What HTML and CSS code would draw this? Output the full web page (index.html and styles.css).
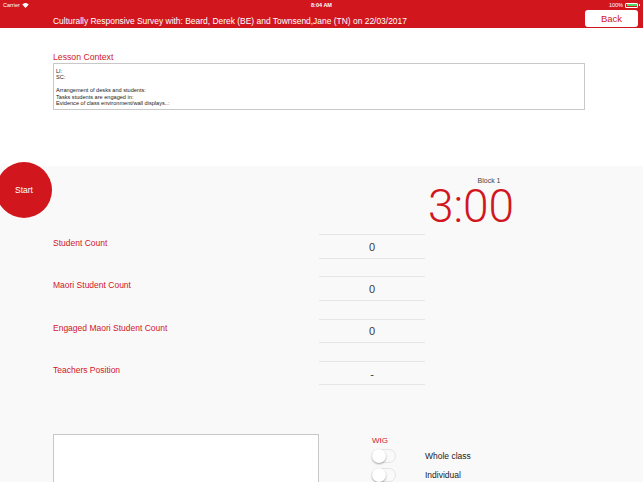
FILE: index.html
```html
<!DOCTYPE html>
<html>
<head>
<meta charset="utf-8">
<link rel="stylesheet" href="styles.css">
</head>
<body>
<div class="app">
  <header class="header">
    <div class="status">
      <div class="status-left">Carrier
        <svg class="wifi" width="7" height="5" viewBox="0 0 14 10"><path d="M7 10 L0.5 3 A9.5 9.5 0 0 1 13.5 3 Z" fill="#fff"/></svg>
      </div>
      <div class="status-center">8:04 AM</div>
      <div class="status-right">100%
        <span class="battery"><span class="battery-fill"></span></span><span class="battery-tip"></span>
      </div>
    </div>
    <div class="nav">
      <div class="title">Culturally Responsive Survey with: Beard, Derek (BE) and Townsend,Jane (TN) on 22/03/2017</div>
      <button class="back">Back</button>
    </div>
  </header>

  <section class="context">
    <div class="ctx-label">Lesson Context</div>
    <div class="ctx-box">
      <div>LI:</div>
      <div>SC:</div>
      <div>&nbsp;</div>
      <div>Arrangement of desks and students:</div>
      <div>Tasks students are engaged in:</div>
      <div>Evidence of class environment/wall displays..:</div>
    </div>
  </section>

  <section class="main">
    <button class="start">Start</button>
    <div class="top">
      <div class="timer">
        <div class="block-label">Block 1</div>
        <div class="clock">3:00</div>
      </div>
    </div>
    <div class="rows">
      <div class="row"><div class="row-label">Student Count</div><div class="cell">0</div></div>
      <div class="row"><div class="row-label">Maori Student Count</div><div class="cell">0</div></div>
      <div class="row"><div class="row-label">Engaged Maori Student Count</div><div class="cell">0</div></div>
      <div class="row"><div class="row-label">Teachers Position</div><div class="cell">-</div></div>
    </div>
    <div class="bottom">
      <div class="notes"></div>
      <div class="wig">
        <div class="wig-label">WIG</div>
        <div class="opt"><span class="toggle"><span class="knob"></span></span><span class="opt-label">Whole class</span></div>
        <div class="opt"><span class="toggle"><span class="knob"></span></span><span class="opt-label">Individual</span></div>
      </div>
    </div>
  </section>
</div>
</body>
</html>
```

FILE: styles.css
```css
* { box-sizing: border-box; }
html, body { margin: 0; padding: 0; }
body {
  width: 643px;
  height: 482px;
  overflow: hidden;
  font-family: "Liberation Sans", Arial, sans-serif;
  background: #f9f9f9;
}
.app { display: flex; flex-direction: column; height: 482px; }

.header {
  flex-shrink: 0;
  background: #d1161e;
  height: 28px;
  color: #fff;
  display: flex;
  flex-direction: column;
}
.status {
  height: 10px;
  display: flex;
  align-items: center;
  justify-content: space-between;
  font-size: 5.5px;
  padding: 0 3px;
  position: relative;
}
.status-left { display: flex; align-items: center; gap: 2px; }
.status-center {
  position: absolute;
  left: 0; right: 0;
  text-align: center;
  font-weight: bold;
}
.status-right { display: flex; align-items: center; gap: 2px; }
.battery {
  width: 13px; height: 5px;
  border: 0.6px solid #fff;
  border-radius: 1px;
  padding: 0.5px;
  display: inline-flex;
}
.battery-fill { flex: 1; background: #4cd964; }
.battery-tip { width: 1px; height: 2px; background: #fff; margin-left: -1px; }

.nav {
  height: 18px;
  display: flex;
  align-items: center;
  padding-left: 53px;
  padding-right: 5px;
}
.title { flex: 1; font-size: 8.45px; padding-top: 3px; white-space: nowrap; }
.back {
  width: 53px;
  height: 17px;
  background: #fff;
  border: none;
  border-radius: 3px;
  color: #d1161e;
  font-family: inherit;
  font-size: 9.5px;
  padding: 0;
  margin-top: -1px;
}

.context {
  flex-shrink: 0;
  background: #fff;
  height: 138px;
  padding: 24px 58px 0 53px;
}
.ctx-label { color: #d1161e; font-size: 8.7px; line-height: 11px; }
.ctx-box {
  border: 1px solid #c8c8c8;
  height: 47px;
  padding: 4px 2px 0;
  font-size: 5.6px;
  line-height: 6.4px;
  color: #222;
}

.main {
  flex: 1;
  min-height: 0;
  position: relative;
  background: #f9f9f9;
}
.start {
  position: absolute;
  left: -4px;
  top: -4px;
  width: 56px;
  height: 56px;
  border-radius: 50%;
  border: none;
  background: #d1161e;
  color: #fff;
  font-family: inherit;
  font-size: 8.5px;
  padding: 0;
}
.top { height: 68px; }
.timer {
  margin-left: 424px;
  width: 94px;
  padding-top: 11px;
}
.block-label {
  padding-left: 36px;
  text-align: center;
  font-size: 7px;
  line-height: 8px;
  color: #444;
}
.clock {
  font-family: Roboto, "Liberation Sans", sans-serif;
  font-weight: 300;
  font-size: 46px;
  line-height: 40px;
  color: #d1161e;
  text-align: center;
  margin-top: 1px;
}

.rows { display: flex; flex-direction: column; }
.row {
  height: 42.33px;
  display: grid;
  grid-template-columns: 266px 106px;
  padding-left: 53px;
}
.row-label { color: #d1161e; font-size: 8.5px; line-height: 10px; padding-top: 4px; }
.cell {
  height: 24.5px;
  border-top: 1px solid #e6e6e6;
  border-bottom: 1px solid #e6e6e6;
  display: flex;
  align-items: center;
  justify-content: center;
  font-size: 11px;
  color: #3a3a3a;
  padding-top: 1px;
}

.bottom {
  margin-top: 30.7px;
  display: flex;
  padding-left: 53px;
}
.notes {
  width: 266px;
  height: 60px;
  background: #fff;
  border: 1px solid #c8c8c8;
}
.wig { margin-left: 53px; padding-top: 2px; }
.wig-label { color: #d1161e; font-size: 8px; line-height: 10px; }
.opt { display: flex; align-items: center; height: 19px; }
.toggle {
  width: 24px;
  height: 14px;
  border-radius: 7px;
  border: 1px solid #e4e4e4;
  background: #fafafa;
  position: relative;
  display: inline-block;
}
.knob {
  position: absolute;
  left: -1px; top: -1px;
  width: 14px; height: 14px;
  border-radius: 50%;
  background: #fff;
  box-shadow: 0 1px 2px rgba(0,0,0,0.35);
}
.opt-label { margin-left: 29px; font-size: 8.5px; color: #222; }
```
